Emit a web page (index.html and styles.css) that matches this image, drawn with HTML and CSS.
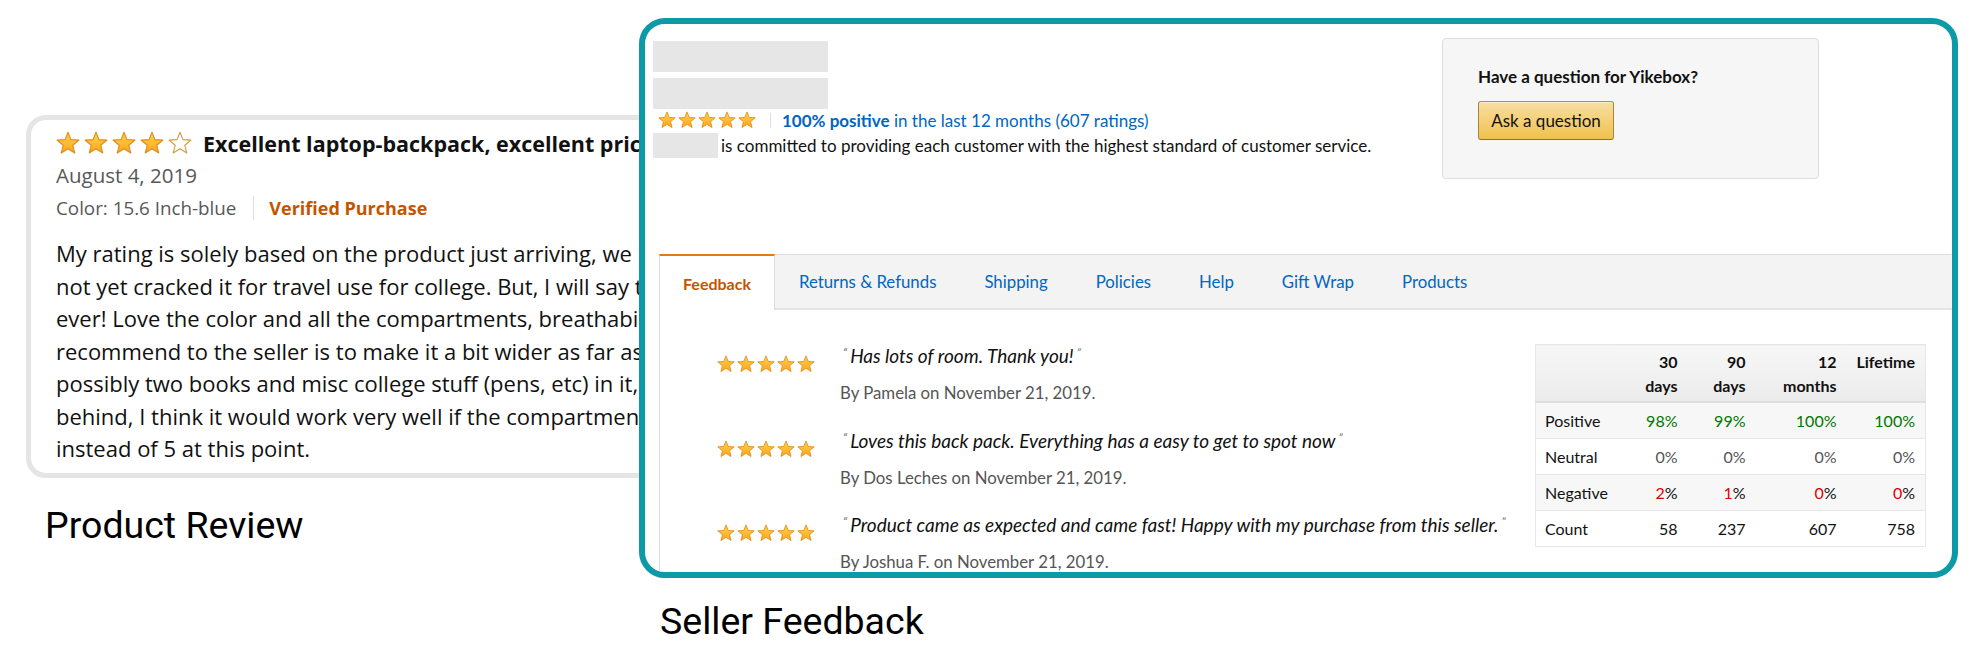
FILE: index.html
```html
<!DOCTYPE html>
<html>
<head>
<meta charset="utf-8">
<title>Product Review vs Seller Feedback</title>
<link rel="stylesheet" href="styles.css">
</head>
<body>
<svg class="defs" width="0" height="0" aria-hidden="true">
  <defs>
    <linearGradient id="starfill" x1="0" y1="0" x2="0" y2="1">
      <stop offset="0" stop-color="#ffd54f"/>
      <stop offset="1" stop-color="#ffa41c"/>
    </linearGradient>
    <symbol id="star" viewBox="0 0 20 20">
      <path d="M10 1 L12.47 7.2 L19.13 7.63 L13.99 11.9 L15.64 18.37 L10 14.8 L4.36 18.37 L6.01 11.9 L0.87 7.63 L7.53 7.2 Z" fill="url(#starfill)" stroke="#de8a16" stroke-width="0.9" stroke-linejoin="round"/>
    </symbol>
    <symbol id="star-empty" viewBox="0 0 20 20">
      <path d="M10 1 L12.47 7.2 L19.13 7.63 L13.99 11.9 L15.64 18.37 L10 14.8 L4.36 18.37 L6.01 11.9 L0.87 7.63 L7.53 7.2 Z" fill="#fff" stroke="#d29a3c" stroke-width="0.9" stroke-linejoin="round"/>
    </symbol>
  </defs>
</svg>

<div class="stage">
  <section class="fig fig-review">
    <div class="review-card">
      <div class="rv-head">
        <span class="stars stars-lg">
          <svg class="star"><use href="#star"/></svg>
          <svg class="star"><use href="#star"/></svg>
          <svg class="star"><use href="#star"/></svg>
          <svg class="star"><use href="#star"/></svg>
          <svg class="star"><use href="#star-empty"/></svg>
        </span>
        <span class="rv-title">Excellent laptop-backpack, excellent price</span>
      </div>
      <div class="rv-date">August 4, 2019</div>
      <div class="rv-meta">
        <span class="rv-color">Color: 15.6 Inch-blue</span>
        <span class="rv-sep"></span>
        <span class="rv-verified">Verified Purchase</span>
      </div>
      <div class="rv-body">
        <div>My rating is solely based on the product just arriving, we have</div>
        <div>not yet cracked it for travel use for college. But, I will say this</div>
        <div>ever! Love the color and all the compartments, breathability</div>
        <div>recommend to the seller is to make it a bit wider as far as</div>
        <div>possibly two books and misc college stuff (pens, etc) in it, and</div>
        <div>behind, I think it would work very well if the compartments</div>
        <div>instead of 5 at this point.</div>
      </div>
    </div>
    <div class="caption">Product Review</div>
  </section>

  <section class="fig fig-seller">
    <div class="frame">
      <div class="sl-header">
        <div class="sl-info">
          <div class="ph ph-name"></div>
          <div class="ph ph-name ph-name2"></div>
          <div class="sl-rating">
            <span class="stars stars-sm">
              <svg class="star"><use href="#star"/></svg>
              <svg class="star"><use href="#star"/></svg>
              <svg class="star"><use href="#star"/></svg>
              <svg class="star"><use href="#star"/></svg>
              <svg class="star"><use href="#star"/></svg>
            </span>
            <span class="sl-sep"></span>
            <span class="sl-link"><b>100% positive</b> in the last 12 months (607 ratings)</span>
          </div>
          <div class="sl-commit">
            <span class="ph ph-inline"></span>
            <span>is committed to providing each customer with the highest standard of customer service.</span>
          </div>
        </div>
        <div class="ask-box">
          <div class="ask-title">Have a question for Yikebox?</div>
          <button class="ask-btn" type="button">Ask a question</button>
        </div>
      </div>

      <nav class="tabs">
        <span class="tab active">Feedback</span>
        <span class="tab">Returns &amp; Refunds</span>
        <span class="tab">Shipping</span>
        <span class="tab">Policies</span>
        <span class="tab">Help</span>
        <span class="tab">Gift Wrap</span>
        <span class="tab">Products</span>
      </nav>

      <div class="panel">
        <div class="fb-list">
          <div class="fb-row">
            <span class="stars stars-sm fb-stars">
              <svg class="star"><use href="#star"/></svg>
              <svg class="star"><use href="#star"/></svg>
              <svg class="star"><use href="#star"/></svg>
              <svg class="star"><use href="#star"/></svg>
              <svg class="star"><use href="#star"/></svg>
            </span>
            <div class="fb-text">
              <div class="fb-quote"><span class="q">&ldquo;</span>Has lots of room. Thank you!<span class="q">&rdquo;</span></div>
              <div class="fb-by">By Pamela on November 21, 2019.</div>
            </div>
          </div>
          <div class="fb-row">
            <span class="stars stars-sm fb-stars">
              <svg class="star"><use href="#star"/></svg>
              <svg class="star"><use href="#star"/></svg>
              <svg class="star"><use href="#star"/></svg>
              <svg class="star"><use href="#star"/></svg>
              <svg class="star"><use href="#star"/></svg>
            </span>
            <div class="fb-text">
              <div class="fb-quote"><span class="q">&ldquo;</span>Loves this back pack. Everything has a easy to get to spot now<span class="q">&rdquo;</span></div>
              <div class="fb-by">By Dos Leches on November 21, 2019.</div>
            </div>
          </div>
          <div class="fb-row">
            <span class="stars stars-sm fb-stars">
              <svg class="star"><use href="#star"/></svg>
              <svg class="star"><use href="#star"/></svg>
              <svg class="star"><use href="#star"/></svg>
              <svg class="star"><use href="#star"/></svg>
              <svg class="star"><use href="#star"/></svg>
            </span>
            <div class="fb-text">
              <div class="fb-quote"><span class="q">&ldquo;</span>Product came as expected and came fast! Happy with my purchase from this seller.<span class="q">&rdquo;</span></div>
              <div class="fb-by">By Joshua F. on November 21, 2019.</div>
            </div>
          </div>
        </div>

        <table class="fb-table">
          <colgroup>
            <col class="c-label"><col class="c-30"><col class="c-90"><col class="c-12"><col class="c-life">
          </colgroup>
          <thead>
            <tr><th></th><th>30<br>days</th><th>90<br>days</th><th>12<br>months</th><th>Lifetime</th></tr>
          </thead>
          <tbody>
            <tr class="alt"><td>Positive</td><td class="pos">98%</td><td class="pos">99%</td><td class="pos">100%</td><td class="pos">100%</td></tr>
            <tr><td>Neutral</td><td class="neu">0%</td><td class="neu">0%</td><td class="neu">0%</td><td class="neu">0%</td></tr>
            <tr class="alt"><td>Negative</td><td><span class="neg">2</span>%</td><td><span class="neg">1</span>%</td><td><span class="neg">0</span>%</td><td><span class="neg">0</span>%</td></tr>
            <tr><td>Count</td><td>58</td><td>237</td><td>607</td><td>758</td></tr>
          </tbody>
        </table>
      </div>
    </div>
    <div class="caption">Seller Feedback</div>
  </section>
</div>
</body>
</html>
```

FILE: styles.css
```css
html, body {
  margin: 0;
  padding: 0;
  background: #fff;
}
body {
  width: 1981px;
  height: 666px;
  overflow: hidden;
  font-family: "Lato", "Liberation Sans", sans-serif;
  color: #111;
}
.defs {
  display: block;
  width: 0;
  height: 0;
  overflow: hidden;
}

.stage {
  display: flex;
  align-items: flex-start;
}

/* ---------- shared ---------- */
.stars {
  display: flex;
  flex: none;
}
.star {
  display: block;
  flex: none;
}
.stars-lg { gap: 4px; }
.stars-lg .star { width: 24px; height: 24px; }
.stars-sm { gap: 2px; }
.stars-sm .star { width: 18px; height: 18px; }

.caption {
  font-family: "Roboto", "Liberation Sans", sans-serif;
  font-size: 37.5px;
  line-height: 40px;
  color: #000;
}

/* ---------- product review ---------- */
.fig-review {
  flex: none;
  width: 700px;
  margin-left: 26px;
  margin-top: 115px;
}
.review-card {
  box-sizing: border-box;
  height: 363px;
  border: 5px solid #e5e5e5;
  border-radius: 20px;
  padding: 9px 0 0 25px;
  white-space: nowrap;
  overflow: hidden;
  font-family: "Open Sans", "Liberation Sans", sans-serif;
}
.rv-head {
  display: flex;
  align-items: center;
  gap: 11px;
  height: 28px;
}
.rv-title {
  font-weight: 700;
  font-size: 21.5px;
  color: #111;
}
.rv-date {
  margin-top: 4px;
  font-size: 20.5px;
  line-height: 28px;
  color: #565959;
}
.rv-meta {
  display: flex;
  align-items: center;
  margin-top: 7px;
  height: 24px;
  font-size: 18px;
  color: #565959;
}
.rv-color {
  font-size: 18.8px;
}
.rv-sep {
  width: 1px;
  height: 24px;
  background: #ddd;
  margin: 0 15px 0 17px;
}
.rv-verified {
  color: #c45500;
  font-weight: 700;
}
.rv-body {
  margin-top: 17px;
  font-size: 22px;
  line-height: 32.5px;
  color: #111;
}
.fig-review .caption {
  margin-top: 27px;
  margin-left: 19px;
}

/* ---------- seller feedback ---------- */
.fig-seller {
  flex: none;
  position: relative;
  z-index: 1;
  margin-left: -87px;
  margin-top: 18px;
}
.frame {
  box-sizing: border-box;
  width: 1319px;
  height: 560px;
  border: 6px solid #0b9aa6;
  border-radius: 26px;
  background: #fff;
  overflow: hidden;
  font-size: 16px;
}
.fig-seller .caption {
  margin-top: 23px;
  margin-left: 21px;
}

.sl-header {
  box-sizing: border-box;
  display: flex;
  height: 230px;
  padding: 17px 0 0 8px;
}
.sl-info {
  flex: none;
  width: 789px;
}
.ph {
  background: #e6e6e6;
}
.ph-name {
  width: 175px;
  height: 31px;
}
.ph-name2 {
  margin-top: 6px;
}
.sl-rating {
  display: flex;
  align-items: center;
  height: 18px;
  margin-top: 2px;
  padding-left: 5px;
}
.sl-sep {
  width: 1px;
  height: 15px;
  background: #ddd;
  margin: 0 11px 0 14px;
}
.sl-link {
  color: #0066c0;
  font-size: 17px;
  white-space: nowrap;
}
.sl-link b { font-weight: 700; }
.sl-commit {
  display: flex;
  align-items: center;
  margin-top: 4px;
  height: 25px;
  font-size: 17px;
  white-space: nowrap;
  color: #111;
}
.ph-inline {
  width: 65px;
  height: 25px;
  margin-right: 3px;
}

.ask-box {
  box-sizing: border-box;
  flex: none;
  width: 377px;
  height: 141px;
  margin-top: -3px;
  padding: 28px 0 0 35px;
  background: #f6f6f6;
  border: 1px solid #ddd;
  border-radius: 4px;
}
.ask-title {
  font-weight: 700;
  font-size: 17px;
  line-height: 20px;
  color: #111;
}
.ask-btn {
  display: block;
  box-sizing: border-box;
  margin-top: 14px;
  width: 136px;
  height: 39px;
  padding: 0;
  font-family: inherit;
  font-size: 17px;
  color: #111;
  background: linear-gradient(#f7dfa5, #f0c14b);
  border: 1px solid;
  border-color: #b59139 #a88734 #8d7230;
  border-radius: 3px;
  box-shadow: inset 0 1px 0 rgba(255, 255, 255, 0.4);
}

.tabs {
  box-sizing: border-box;
  display: flex;
  height: 56px;
  margin-left: 14px;
  background: #f3f3f3;
  border-top: 1px solid #dddddd;
  border-bottom: 2px solid #e3e3e3;
}
.tab {
  display: flex;
  align-items: center;
  padding: 0 24px;
  font-size: 16.8px;
  color: #0066c0;
  white-space: nowrap;
}
.tab.active {
  position: relative;
  margin-top: -1px;
  margin-bottom: -2px;
  padding: 0 23px;
  background: #fff;
  color: #c45500;
  font-size: 16px;
  font-weight: 700;
  border-top: 2px solid #e47911;
  border-left: 1px solid #dddddd;
  border-right: 1px solid #dddddd;
}

.panel {
  display: flex;
  align-items: flex-start;
  margin-left: 14px;
  padding-top: 34px;
  height: 300px;
  border-left: 1px solid #dddddd;
}
.fb-list {
  flex: none;
}
.fb-row {
  display: flex;
  align-items: flex-start;
  padding-left: 57px;
}
.fb-row + .fb-row {
  margin-top: 23.5px;
}
.fb-stars {
  width: 123px;
  margin-top: 11px;
}
.fb-text {
  white-space: nowrap;
}
.fb-quote {
  height: 24px;
  font-style: italic;
  font-size: 19px;
  line-height: 24px;
  color: #111;
}
.fb-quote .q {
  font-size: 12px;
  line-height: 1;
  vertical-align: 6px;
  color: #666;
  padding: 0 3px;
}
.fb-by {
  margin-top: 13px;
  font-size: 16.8px;
  line-height: 24px;
  color: #555;
}

.fb-table {
  margin-left: auto;
  margin-right: 26px;
  border-collapse: collapse;
  border: 1px solid #e7e7e7;
  font-size: 16px;
  color: #111;
}
.c-label { width: 84px; }
.c-30 { width: 68px; }
.c-90 { width: 68px; }
.c-12 { width: 91px; }
.c-life { width: 79px; }
.fb-table th {
  padding: 5px 10px 3px 9px;
  line-height: 24px;
  font-weight: 700;
  text-align: right;
  vertical-align: top;
  background: linear-gradient(#f7f7f7, #ebebeb);
  border-bottom: 2px solid #dedede;
}
.fb-table td {
  height: 36px;
  padding: 0 10px 0 9px;
  text-align: right;
  border-top: 1px solid #e7e7e7;
  box-sizing: border-box;
}
.fb-table td:first-child {
  text-align: left;
}
.fb-table tr.alt td {
  background: #f7f7f7;
}
.pos { color: #007600; }
.neu { color: #555; }
.neg { color: #e00000; }
```
